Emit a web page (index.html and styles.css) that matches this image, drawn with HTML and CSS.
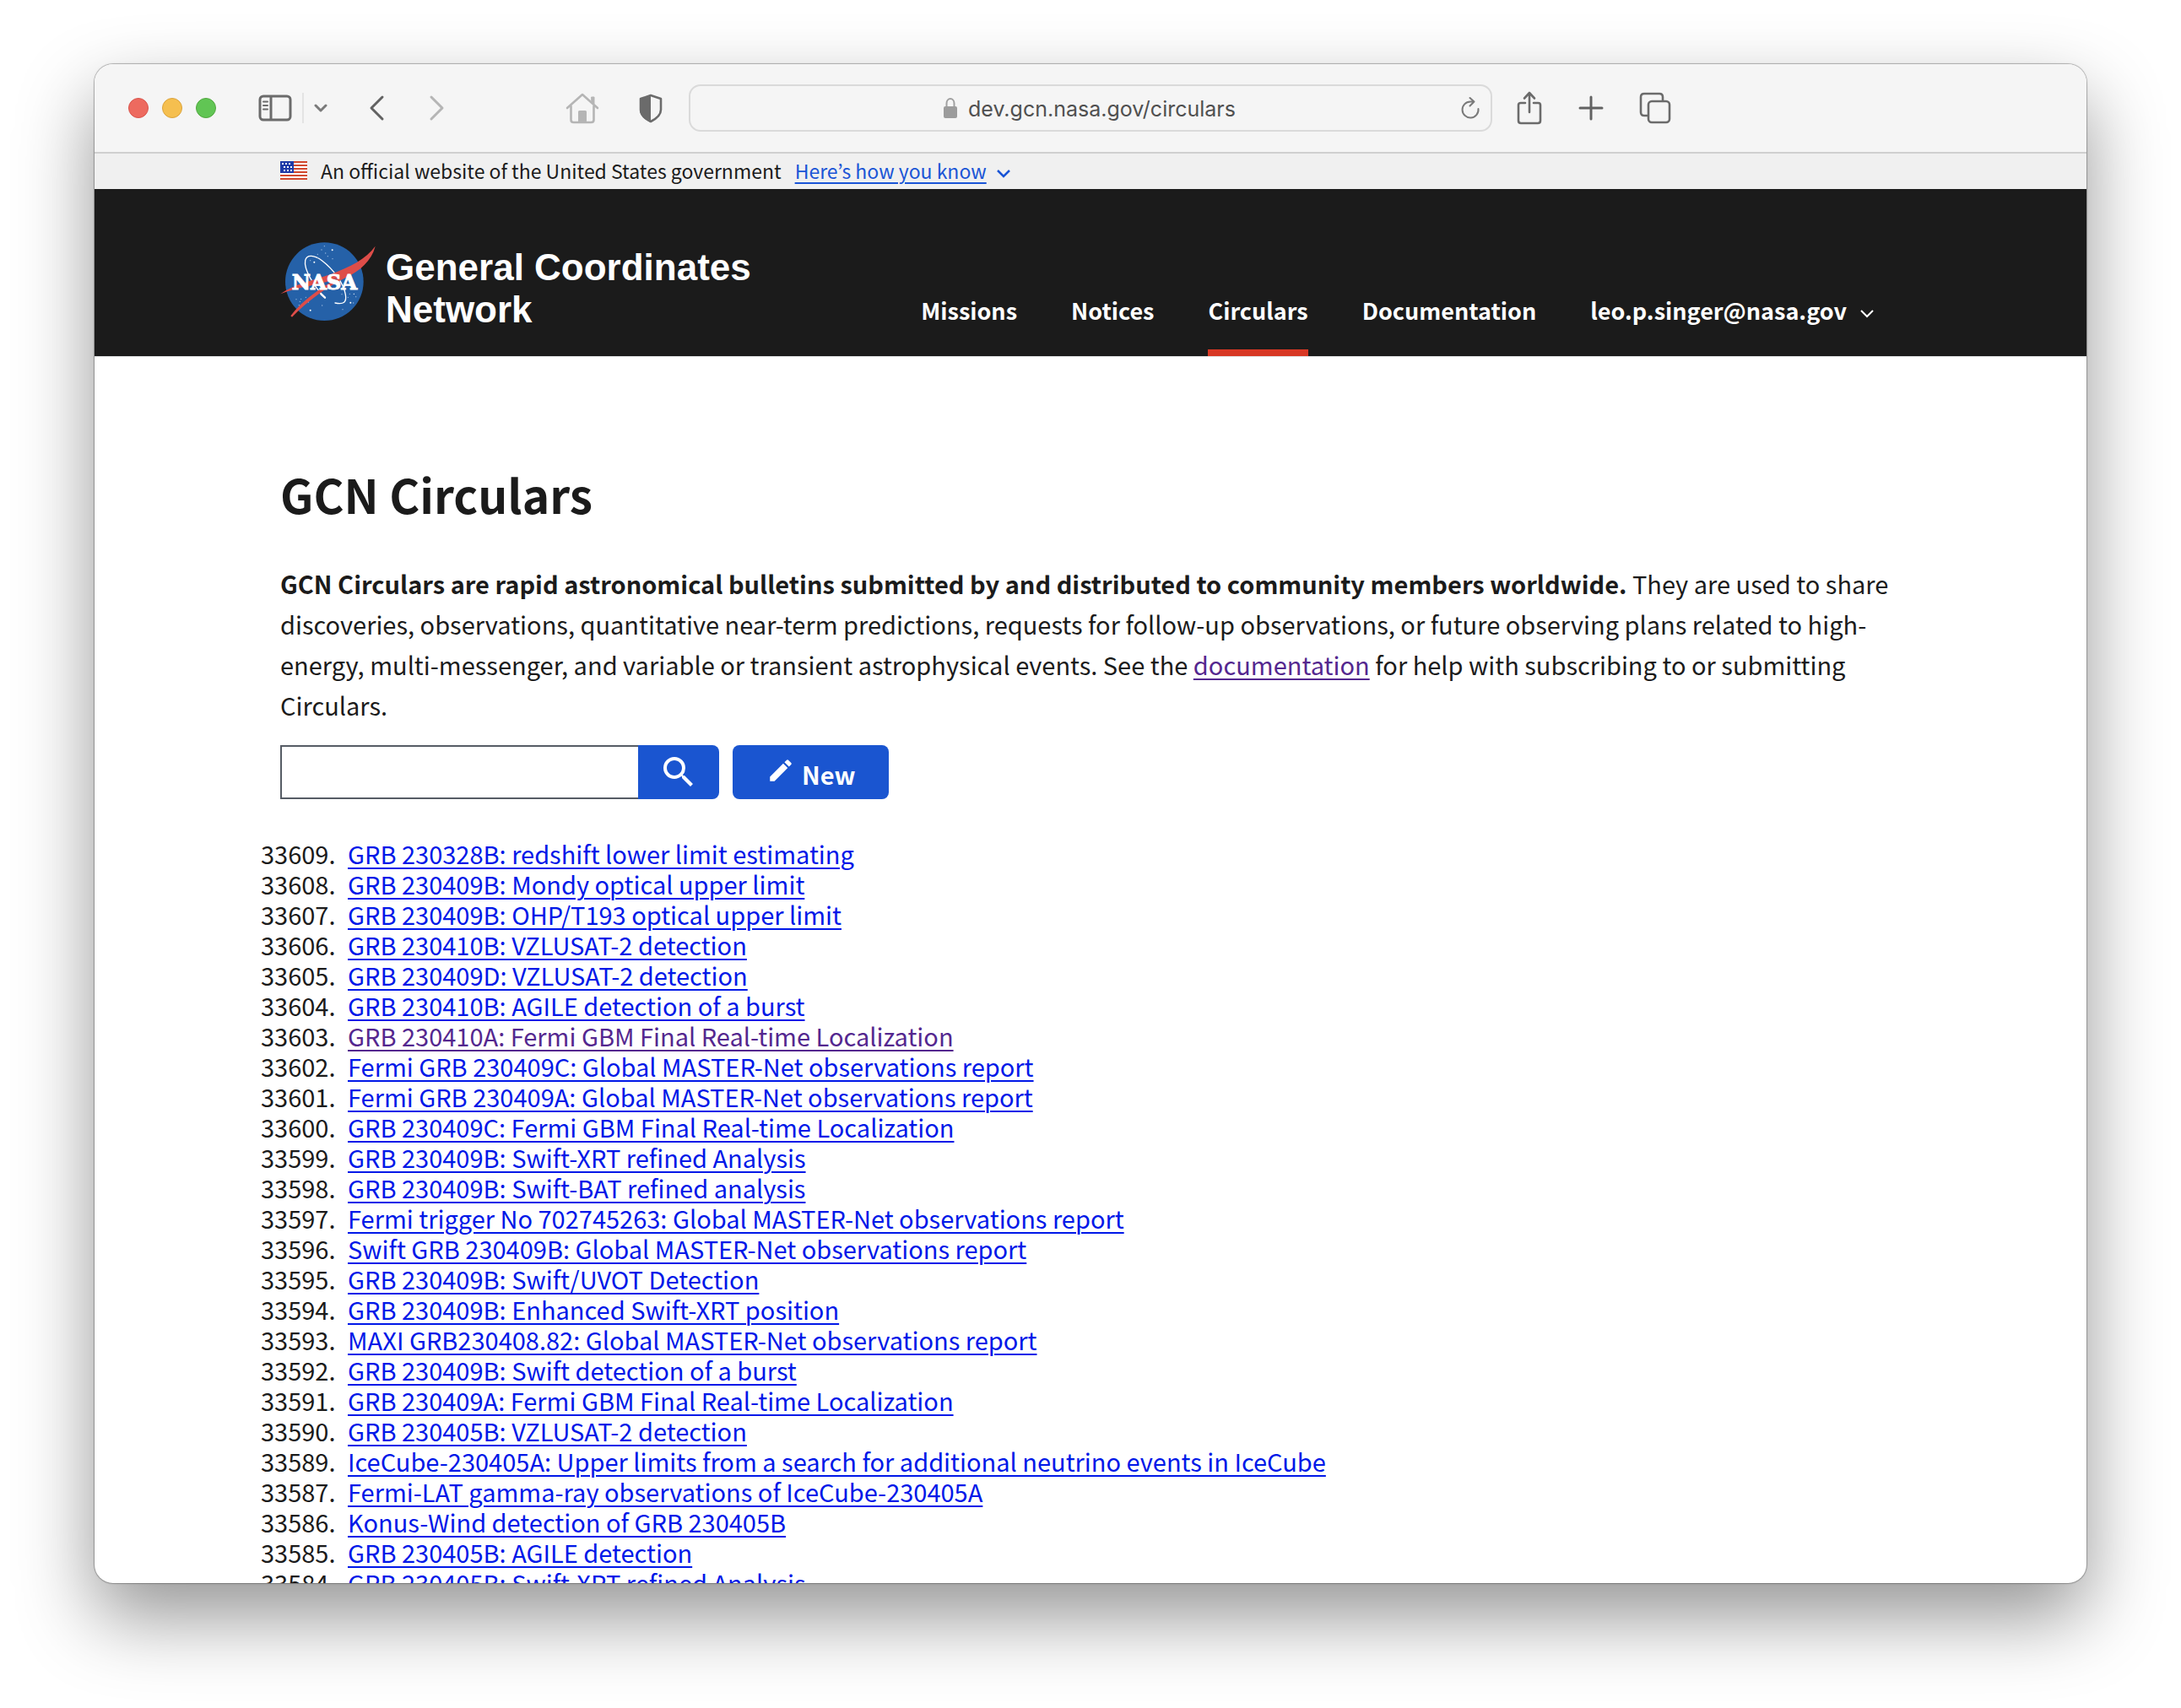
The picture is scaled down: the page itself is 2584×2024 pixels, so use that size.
FILE: index.html
```html
<!DOCTYPE html>
<html lang="en">
<head>
<meta charset="utf-8">
<meta name="viewport" content="width=device-width, initial-scale=1">
<title>GCN Circulars</title>
<link rel="stylesheet" href="styles.css">
</head>
<body>
<div class="window">
  <div class="toolbar">
    <div class="toolbar-left">
      <div class="lights">
        <button class="light light-close" aria-label="Close"></button>
        <button class="light light-minimize" aria-label="Minimize"></button>
        <button class="light light-zoom" aria-label="Zoom"></button>
      </div>
      <div class="sidebar-tools">
        <button class="tool" aria-label="Show sidebar">
          <svg width="40" height="32" viewBox="0 0 40 32" fill="none" stroke="#6b6b6b" stroke-width="3"><rect x="2" y="2" width="36" height="28" rx="4"/><path d="M15 2v28"/><path d="M6 8.500h5M6 13h5M6 17.500h5" stroke-width="2" stroke-linecap="round"/></svg>
        </button>
        <span class="tool-divider"></span>
        <button class="tool" aria-label="Tab groups">
          <svg width="16" height="12" viewBox="0 0 16 12" fill="none" stroke="#7a7a7a" stroke-width="3" stroke-linecap="round" stroke-linejoin="round"><path d="M2 3l6 6 6-6"/></svg>
        </button>
      </div>
      <div class="history-tools">
        <button class="tool" aria-label="Back">
          <svg width="20" height="32" viewBox="0 0 20 32" fill="none" stroke="#626262" stroke-width="3" stroke-linecap="round" stroke-linejoin="round"><path d="M17 3L4 16l13 13"/></svg>
        </button>
        <button class="tool" aria-label="Forward">
          <svg width="20" height="32" viewBox="0 0 20 32" fill="none" stroke="#b5b5b5" stroke-width="3" stroke-linecap="round" stroke-linejoin="round"><path d="M3 3l13 13L3 29"/></svg>
        </button>
      </div>
      <div class="page-tools">
        <button class="tool" aria-label="Home">
          <svg width="40" height="38" viewBox="0 0 40 38" fill="none" stroke="#b5b5b5" stroke-width="2.600" stroke-linecap="round" stroke-linejoin="round"><path d="M2 19L20 3l18 16M6.500 17v16q0 3 3 3h21q3 0 3-3V17"/><path d="M31 6h3v8l-3-3z" fill="#b5b5b5" stroke-width="1"/><path d="M15 36V23.500q0-1.500 1.500-1.500h7q1.500 0 1.500 1.500V36z" fill="#b5b5b5" stroke="none"/></svg>
        </button>
        <button class="tool" aria-label="Privacy report">
          <svg width="30" height="36" viewBox="0 0 30 36"><path d="M15 3l12 4v13c0 6-6 11-12 14C9 31 3 26 3 20V7z" fill="none" stroke="#6b6b6b" stroke-width="2.600" stroke-linejoin="round"/><path d="M15 2L2 7v13c0 7 6 12 13 15z" fill="#6b6b6b"/></svg>
        </button>
      </div>
    </div>
    <div class="address">
      <label class="address-main">
        <svg width="18" height="26" viewBox="0 0 18 26"><path d="M4.500 12V7.500a4.500 5.500 0 0 1 9 0V12" fill="none" stroke="#a0a0a0" stroke-width="2"/><rect x="1" y="11" width="16" height="14" rx="2" fill="#9c9c9c"/></svg>
        <input class="address-input" type="text" aria-label="Address" value="dev.gcn.nasa.gov/circulars">
      </label>
      <button class="tool" aria-label="Reload">
        <svg width="24" height="28" viewBox="0 0 24 28" fill="none" stroke="#7a7a7a" stroke-width="2" stroke-linecap="round" stroke-linejoin="round"><path d="M21.500 15A9.500 9.500 0 1 1 12 6.500h4.500M11.500 2l5 4.500-5 5"/></svg>
      </button>
    </div>
    <div class="toolbar-right">
      <button class="tool" aria-label="Share">
        <svg width="32" height="40" viewBox="0 0 32 40" fill="none" stroke="#6b6b6b" stroke-width="2.600" stroke-linecap="round" stroke-linejoin="round"><path d="M11 14H5.500Q3 14 3 16.500V35q0 3 3 3h20q3 0 3-3V16.500Q29 14 26.500 14H21M16 25V3M10 8.500L16 2l6 6.500"/></svg>
      </button>
      <button class="tool" aria-label="New tab">
        <svg width="30" height="30" viewBox="0 0 30 30" fill="none" stroke="#626262" stroke-width="3" stroke-linecap="round"><path d="M15 2v26M2 15h26"/></svg>
      </button>
      <button class="tool" aria-label="Tab overview">
        <svg width="38" height="38" viewBox="0 0 38 38" fill="none" stroke="#6b6b6b" stroke-width="2.600" stroke-linejoin="round"><rect x="11" y="11" width="25" height="25" rx="4"/><path d="M11 28H6q-4 0-4-4V6q0-4 4-4h18q4 0 4 4v5"/></svg>
      </button>
    </div>
  </div>

  <div class="banner">
    <div class="container banner-inner">
      <svg width="32" height="22" viewBox="0 0 32 22" shape-rendering="crispEdges"><path fill="#fff" d="M0 0h32v22H0z"/><path fill="#d1492f" d="M0 0h32v2H0zM0 4h32v2H0zM0 8h32v2H0zM0 12h32v2H0zM0 16h32v2H0zM0 20h32v2H0z"/><path fill="#1f3ba8" d="M0 0h16v14H0z"/><path fill="#fff" d="M2 2h2v2H2zM6 2h2v2H6zM10 2h2v2h-2zM4 6h2v2H4zM8 6h2v2H8zM12 6h2v2h-2zM4 10h2v2H4zM8 10h2v2H8zM12 10h2v2h-2z"/></svg>
      <span class="banner-text">An official website of the United States government</span>
      <a class="banner-link" href="#">Here’s how you know</a>
      <svg class="caret" width="16" height="12" viewBox="0 0 16 12" fill="none" stroke="#1a55d6" stroke-width="2.500"><path d="M1 2l7 7 7-7"/></svg>
    </div>
  </div>

  <header class="header">
    <div class="container header-inner">
      <a class="brand" href="#">
        <svg class="logo" width="113" height="96" viewBox="21 20 339 288">
          <circle cx="178" cy="163" r="139" fill="#2561a8"/>
          <g fill="none" stroke="#fff" stroke-linecap="round"><path d="M180 220C142 182 104 120 110 88c5-22 32-20 60 1 38 29 76 78 83 120 5 28-6 36-37 30" stroke-width="4"/><path d="M166 207l14 13" stroke-width="7"/></g>
          <g fill="#fff"><circle cx="206" cy="51" r="3"/><circle cx="142" cy="94" r="3"/><circle cx="128" cy="265" r="3"/><circle cx="271" cy="238" r="3"/><circle cx="283" cy="207" r="2"/></g>
          <g fill="#9dbce0"><circle cx="178" cy="37" r="2"/><circle cx="168" cy="50" r="2"/><circle cx="182" cy="62" r="2"/><circle cx="154" cy="66" r="2"/><circle cx="190" cy="73" r="2"/><circle cx="207" cy="82" r="2"/><circle cx="128" cy="88" r="2"/><circle cx="155" cy="78" r="2"/><circle cx="78" cy="226" r="2"/><circle cx="91" cy="234" r="2"/><circle cx="95" cy="225" r="2"/><circle cx="112" cy="219" r="2"/><circle cx="121" cy="236" r="2"/><circle cx="88" cy="247" r="2"/><circle cx="170" cy="248" r="2"/><circle cx="243" cy="262" r="2"/><circle cx="290" cy="217" r="2"/><circle cx="281" cy="239" r="2"/><circle cx="268" cy="207" r="2"/><circle cx="240" cy="208" r="2"/><circle cx="262" cy="219" r="2"/></g>
          <path fill="#de4d49" d="M22 207C70 172 140 158 200 137C270 110 325 84 359 37C346 88 305 126 248 152C185 184 118 232 63 289L58 285C100 230 165 184 228 150C165 176 80 182 22 207z"/>
          <text x="62" y="190" font-family="'DejaVu Serif', serif" font-weight="700" font-size="73" fill="#fff" stroke="#fff" stroke-width="3">NASA</text>
        </svg>
        <span class="brand-name">General Coordinates<br>Network</span>
      </a>
      <nav class="nav">
        <a class="nav-link" href="#">Missions</a>
        <a class="nav-link" href="#">Notices</a>
        <a class="nav-link nav-current" href="#" aria-current="page">Circulars</a>
        <a class="nav-link" href="#">Documentation</a>
        <button class="nav-link nav-user">leo.p.singer@nasa.gov
          <svg class="caret" width="16" height="12" viewBox="0 0 16 12" fill="none" stroke="#fff" stroke-width="2"><path d="M1 2l7 7 7-7"/></svg>
        </button>
      </nav>
    </div>
  </header>

  <main class="container main">
    <h1 class="title">GCN Circulars</h1>
    <p class="intro"><strong>GCN Circulars are rapid astronomical bulletins submitted by and distributed to community members worldwide.</strong> They are used to share discoveries, observations, quantitative near-term predictions, requests for follow-up observations, or future observing plans related to high-energy, multi-messenger, and variable or transient astrophysical events. See the <a class="visited" href="#">documentation</a> for help with subscribing to or submitting Circulars.</p>
    <div class="actions">
      <form class="search" role="search">
        <input class="search-input" type="search" aria-label="Search circulars">
        <button class="search-button" type="button" aria-label="Search">
          <svg width="48" height="48" viewBox="0 0 24 24" fill="#fff"><path d="M15.500 14h-.790l-.280-.270A6.471 6.471 0 0 0 16 9.500 6.500 6.500 0 1 0 9.500 16c1.610 0 3.090-.590 4.230-1.570l.270.280v.790l5 4.990L20.490 19l-4.990-5zm-6 0C7.010 14 5 11.990 5 9.500S7.010 5 9.500 5 14 7.010 14 9.500 11.990 14 9.500 14z"/></svg>
        </button>
      </form>
      <button class="new-button" type="button">
        <svg class="pencil" width="34" height="34" viewBox="0 0 24 24" fill="#fff"><path d="M3 17.250V21h3.750L17.810 9.940l-3.750-3.750L3 17.250zM20.710 7.040a1 1 0 0 0 0-1.410l-2.340-2.340a1 1 0 0 0-1.410 0l-1.830 1.830 3.750 3.750 1.830-1.830z"/></svg>
        New
      </button>
    </div>
    <ol class="circulars">
      <li value="33609"><a href="#">GRB 230328B: redshift lower limit estimating</a></li>
      <li value="33608"><a href="#">GRB 230409B: Mondy optical upper limit</a></li>
      <li value="33607"><a href="#">GRB 230409B: OHP/T193 optical upper limit</a></li>
      <li value="33606"><a href="#">GRB 230410B: VZLUSAT-2 detection</a></li>
      <li value="33605"><a href="#">GRB 230409D: VZLUSAT-2 detection</a></li>
      <li value="33604"><a href="#">GRB 230410B: AGILE detection of a burst</a></li>
      <li value="33603"><a class="visited" href="#">GRB 230410A: Fermi GBM Final Real-time Localization</a></li>
      <li value="33602"><a href="#">Fermi GRB 230409C: Global MASTER-Net observations report</a></li>
      <li value="33601"><a href="#">Fermi GRB 230409A: Global MASTER-Net observations report</a></li>
      <li value="33600"><a href="#">GRB 230409C: Fermi GBM Final Real-time Localization</a></li>
      <li value="33599"><a href="#">GRB 230409B: Swift-XRT refined Analysis</a></li>
      <li value="33598"><a href="#">GRB 230409B: Swift-BAT refined analysis</a></li>
      <li value="33597"><a href="#">Fermi trigger No 702745263: Global MASTER-Net observations report</a></li>
      <li value="33596"><a href="#">Swift GRB 230409B: Global MASTER-Net observations report</a></li>
      <li value="33595"><a href="#">GRB 230409B: Swift/UVOT Detection</a></li>
      <li value="33594"><a href="#">GRB 230409B: Enhanced Swift-XRT position</a></li>
      <li value="33593"><a href="#">MAXI GRB230408.82: Global MASTER-Net observations report</a></li>
      <li value="33592"><a href="#">GRB 230409B: Swift detection of a burst</a></li>
      <li value="33591"><a href="#">GRB 230409A: Fermi GBM Final Real-time Localization</a></li>
      <li value="33590"><a href="#">GRB 230405B: VZLUSAT-2 detection</a></li>
      <li value="33589"><a href="#">IceCube-230405A: Upper limits from a search for additional neutrino events in IceCube</a></li>
      <li value="33587"><a href="#">Fermi-LAT gamma-ray observations of IceCube-230405A</a></li>
      <li value="33586"><a href="#">Konus-Wind detection of GRB 230405B</a></li>
      <li value="33585"><a href="#">GRB 230405B: AGILE detection</a></li>
      <li value="33584"><a href="#">GRB 230405B: Swift-XRT refined Analysis</a></li>
    </ol>
  </main>
</div>
</body>
</html>
```
FILE: styles.css
```css
@counter-style circular-number {
  system: extends decimal;
  suffix: ".\2002";
}

*,
*::before,
*::after {
  box-sizing: border-box;
}

body {
  margin: 0;
  height: 100vh;
  padding: 76px 112px 148px;
  overflow: hidden;
  background: #fff;
  color: #1b1b1b;
  font-family: "Noto Sans CJK KR", "Open Sans", sans-serif;
  font-size: 29px;
  line-height: 36px;
}

button {
  margin: 0;
  padding: 0;
  border: 0;
  background: none;
  color: inherit;
  font: inherit;
}

svg {
  display: block;
  flex: none;
}

.window {
  height: 100%;
  overflow: hidden;
  border-radius: 22px;
  background: #fff;
  box-shadow: 0 0 0 1px rgba(0, 0, 0, 0.2), 0 0 3px rgba(0, 0, 0, 0.2), 0 40px 90px rgba(0, 0, 0, 0.42);
}

/* Browser toolbar */

.toolbar {
  display: grid;
  grid-template-columns: 1fr minmax(0, 952px) 1fr;
  align-items: center;
  height: 106px;
  border-bottom: 2px solid #cfcfcf;
  background: #f5f5f5;
}

.toolbar-left {
  display: flex;
  align-items: center;
  padding: 0 30px 0 40px;
}

.lights {
  display: flex;
  gap: 16px;
}

.light {
  width: 24px;
  height: 24px;
  border: 1px solid #d9544c;
  border-radius: 50%;
  background: #ed6a5f;
}

.light-minimize {
  border-color: #dba33d;
  background: #f5bf4f;
}

.light-zoom {
  border-color: #51a73f;
  background: #61c554;
}

.sidebar-tools {
  display: flex;
  align-items: center;
  gap: 12px;
  margin-left: 50px;
}

.tool-divider {
  width: 2px;
  height: 36px;
  background: #e3e3e3;
}

.history-tools {
  display: flex;
  gap: 52px;
  margin-left: 48px;
}

.page-tools {
  display: flex;
  align-items: center;
  gap: 46px;
  margin-left: auto;
}

.address {
  display: flex;
  align-items: center;
  height: 56px;
  padding: 0 12px 0 40px;
  border: 2px solid #dadada;
  border-radius: 14px;
  font-family: Inter, "Liberation Sans", sans-serif;
}

.address-main {
  display: flex;
  flex: 1;
  align-items: center;
  justify-content: center;
  gap: 12px;
}

.address-input {
  width: 324px;
  padding: 2px 0 0;
  border: 0;
  background: none;
  color: #505050;
  font: inherit;
  font-size: 25px;
}

.toolbar-right {
  display: flex;
  align-items: center;
  gap: 42px;
  padding-left: 28px;
}

/* Government banner */

.container {
  width: 100%;
  max-width: 2048px;
  margin: 0 auto;
  padding: 0 64px;
}

.caret {
  margin-top: 8px;
}

.banner {
  background: #f0f0f0;
}

.banner-inner {
  display: flex;
  align-items: center;
  height: 42px;
  padding-bottom: 2px;
  font-size: 23px;
}

.banner-text {
  margin: 0 16px;
}

.banner-link {
  margin-right: 12px;
  color: #1a55d6;
}

/* Site header */

.header {
  border-bottom: 1px solid #dfe1e2;
  background: #1b1b1b;
  color: #fff;
}

.header-inner {
  display: flex;
  align-items: flex-end;
  justify-content: space-between;
}

.brand {
  display: flex;
  align-items: flex-start;
  gap: 12px;
  padding: 62px 0 30px;
  color: inherit;
  text-decoration: none;
}

.brand-name {
  padding-top: 6px;
  font: bold 44px/50px "Liberation Sans", sans-serif;
}

.nav {
  display: flex;
  gap: 64px;
  padding-right: 32px;
}

.nav-link {
  padding-bottom: 28px;
  border-bottom: 8px solid transparent;
  color: inherit;
  font-size: 27px;
  font-weight: 700;
  text-decoration: none;
}

.nav-current {
  border-bottom-color: #d83824;
}

.nav-user {
  display: flex;
  align-items: center;
  gap: 16px;
}

/* Page content */

.main {
  padding-top: 126px;
}

.title {
  margin: 0 0 46px;
  font-size: 55px;
  font-weight: 700;
  line-height: 72px;
}

.intro {
  margin: 0;
  line-height: 48px;
}

a {
  text-decoration-thickness: 2px;
  text-underline-offset: 4px;
}

.visited,
.circulars .visited {
  color: #54278f;
}

.actions {
  display: flex;
  gap: 16px;
  margin-top: 24px;
}

.search {
  display: flex;
}

.search-input {
  width: 424px;
  height: 64px;
  padding: 0 16px;
  border: 2px solid #565c65;
  border-right: 0;
  border-radius: 0;
  background: #fff;
  font: inherit;
}

.search-button {
  display: flex;
  align-items: center;
  justify-content: center;
  width: 96px;
  border-radius: 0 8px 8px 0;
  background: #1a55d0;
}

.new-button {
  display: flex;
  align-items: center;
  gap: 8px;
  padding: 4px 40px 0;
  border-radius: 8px;
  background: #1a55d0;
  color: #fff;
  font-weight: 700;
}

.pencil {
  margin-bottom: 8px;
}

.circulars {
  margin: 46px 0 0;
  padding-left: 80px;
  list-style: circular-number;
}

.circulars a {
  color: #0018e8;
}
```
